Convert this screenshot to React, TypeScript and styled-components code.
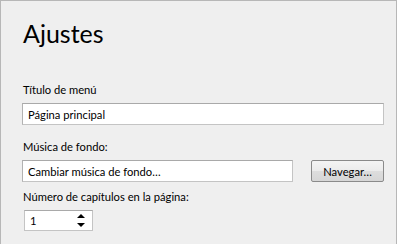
import styled, { createGlobalStyle } from "styled-components";

const GlobalStyle = createGlobalStyle`
  html, body {
    margin: 0;
    padding: 0;
    background: #efefef;
  }
  body {
    font-family: Lato, "Open Sans", sans-serif;
    font-size: 11px;
    color: #000;
  }
`;

const Window = styled.div`
  box-sizing: border-box;
  width: 397px;
  height: 244px;
  background: #efefef;
  border-top: 1px solid #b7b7b7;
  border-left: 1px solid #b7b7b7;
  border-right: 1px solid #b7b7b7;
  padding: 15px 12px 0 21px;
  display: flex;
  flex-direction: column;
`;

const Title = styled.h1`
  margin: 0 0 0 1px;
  font-size: 25px;
  font-weight: 400;
  line-height: 34px;
`;

const Field = styled.div<{ $top: number }>`
  display: flex;
  flex-direction: column;
  margin-top: ${(p) => p.$top}px;
`;

const Label = styled.label`
  margin: 0 0 5px 1px;
  font-size: 11.2px;
  line-height: 16px;
`;

const Row = styled.div`
  display: flex;
  align-items: center;
  gap: 18px;
`;

const TextBox = styled.div<{ $width?: number }>`
  box-sizing: border-box;
  height: 22px;
  width: ${(p) => (p.$width ? `${p.$width}px` : "100%")};
  background: #fff;
  border: 1px solid #c4c4c4;
  border-top-color: #a9a9a9;
  border-left-color: #b2b2b2;
  display: flex;
  align-items: center;
  padding: 0 5px;
  font-size: 11.2px;
  white-space: nowrap;
`;

const Button = styled.button`
  box-sizing: border-box;
  width: 73px;
  height: 22px;
  border: 1px solid #8a8a8a;
  border-radius: 2px;
  background: linear-gradient(#f4f4f4 0%, #ebebeb 50%, #dddddd 51%, #d6d6d6 100%);
  font-family: inherit;
  font-size: 11.2px;
  color: #000;
  padding: 0;
`;

const Spinner = styled.div`
  box-sizing: border-box;
  width: 69px;
  height: 21px;
  margin-left: 2px;
  background: #fff;
  border: 1px solid #c4c4c4;
  border-top-color: #a9a9a9;
  display: flex;
  align-items: center;
  justify-content: space-between;
  padding: 0 7px 0 5px;
  font-size: 11.2px;
`;

const Arrows = () => (
  <svg width="8" height="15" viewBox="0 0 8 15">
    <polygon points="4,1 8,5 0,5" fill="#000" />
    <polygon points="0,10 8,10 4,14" fill="#000" />
  </svg>
);

export default function App() {
  return (
    <>
      <GlobalStyle />
      <Window>
        <Title>Ajustes</Title>
        <Field $top={32}>
          <Label>Título de menú</Label>
          <TextBox>Página principal</TextBox>
        </Field>
        <Field $top={14}>
          <Label>Música de fondo:</Label>
          <Row>
            <TextBox $width={272}>Cambiar música de fondo…</TextBox>
            <Button>Navegar…</Button>
          </Row>
        </Field>
        <Field $top={7}>
          <Label>Número de capítulos en la página:</Label>
          <Spinner>
            <span>1</span>
            <Arrows />
          </Spinner>
        </Field>
      </Window>
    </>
  );
}
